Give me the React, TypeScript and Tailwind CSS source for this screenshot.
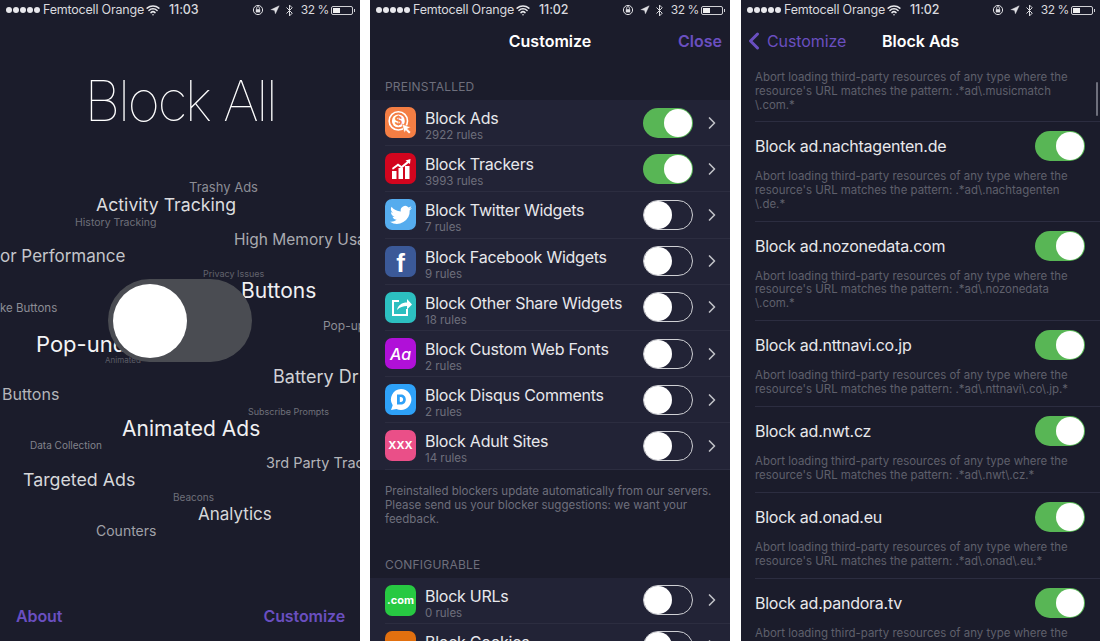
import { ReactNode } from "react";
import { ChevronRight, ChevronLeft, Navigation, Bluetooth, Wifi } from "lucide-react";

function StatusBar({ time }: { time: string }) {
  return (
    <div className="flex h-5 items-center pl-[6px] pr-[5px] text-[12.5px] leading-5 text-[#d9d9de]">
      <div className="flex gap-[1px]">
        {[0, 1, 2, 3, 4].map((i) => (
          <span key={i} className="h-[6px] w-[6px] rounded-full bg-[#e8e8ec]" />
        ))}
      </div>
      <span className="ml-[3px] w-[96px] whitespace-nowrap tracking-[-0.2px]">Femtocell Orange</span>
      <Wifi size={14} strokeWidth={2.6} className="ml-[7px] text-[#e8e8ec]" />
      <span className="ml-[9px] font-medium tracking-[-0.1px]">{time}</span>
      <div className="ml-auto flex items-center">
        <svg width="12" height="12" viewBox="0 0 12 12" className="mr-[6px]">
          <circle cx="6" cy="6" r="4.6" fill="none" stroke="#e0e0e4" strokeWidth="1" />
          <rect x="3.8" y="5.2" width="4.4" height="3.2" fill="#e0e0e4" />
          <path d="M4.6 5.2V4a1.4 1.4 0 0 1 2.8 0v1.2" fill="none" stroke="#e0e0e4" strokeWidth="0.8" />
        </svg>
        <Navigation size={10} fill="#e0e0e4" strokeWidth={1} className="mr-[3px] text-[#e0e0e4]" />
        <Bluetooth size={13} strokeWidth={1.8} className="mr-[5px] text-[#e0e0e4]" />
        <span className="mr-[2px] whitespace-nowrap text-[12px] tracking-[-0.4px]">32 %</span>
        <div className="flex h-[9px] w-[22px] items-stretch rounded-[2px] border border-[#d0d0d4] p-[1px]">
          <div className="w-[7px] bg-[#f0f0f0]" />
        </div>
        <span className="ml-[1px] h-[3px] w-[1px] bg-[#d0d0d4]" />
      </div>
    </div>
  );
}

function Toggle({ on }: { on: boolean }) {
  return (
    <div
      className={
        on
          ? "flex h-[30px] w-[50px] shrink-0 items-center justify-end rounded-full bg-[#58b655] pr-[1px]"
          : "flex h-[30px] w-[50px] shrink-0 items-center rounded-full border border-[#cfd0d4] bg-transparent"
      }
    >
      <span className="h-[28px] w-[28px] rounded-full bg-white" />
    </div>
  );
}

const words = [
  { t: "Trashy Ads", c: "left-[189px] top-[178px] text-[13px] text-[#8c8d95]" },
  { t: "Activity Tracking", c: "left-[96px] top-[192px] text-[17.7px] text-[#dcdcdf]" },
  { t: "History Tracking", c: "left-[75px] top-[215px] text-[10.5px] text-[#6f707a]" },
  { t: "High Memory Usa", c: "left-[234px] top-[228px] text-[15.5px] text-[#a9aab0]" },
  { t: "or Performance", c: "left-0 top-[244px] text-[17px] text-[#c4c5ca]" },
  { t: "Privacy Issues", c: "left-[203px] top-[267px] text-[9px] text-[#62636d]" },
  { t: "Buttons", c: "left-[241px] top-[275px] text-[21px] text-[#f0f0f2]" },
  { t: "ke Buttons", c: "left-0 top-[300px] text-[11.5px] text-[#8c8d95]" },
  { t: "Pop-up", c: "left-[323px] top-[317px] text-[12px] text-[#8c8d95]" },
  { t: "Pop-under", c: "left-[36px] top-[328px] text-[22px] text-[#f4f4f6]" },
  { t: "Animated", c: "left-[105px] top-[354px] text-[8px] text-[#5c5d67]" },
  { t: "Battery Dr", c: "left-[273px] top-[363px] text-[18px] text-[#d0d1d5]" },
  { t: "Buttons", c: "left-[2px] top-[382px] text-[16px] text-[#b4b5ba]" },
  { t: "Subscribe Prompts", c: "left-[248px] top-[405px] text-[9px] text-[#6f707a]" },
  { t: "Animated Ads", c: "left-[122px] top-[413px] text-[21px] text-[#f0f0f2]" },
  { t: "Data Collection", c: "left-[30px] top-[438px] text-[10px] text-[#82838c]" },
  { t: "3rd Party Trac", c: "left-[266px] top-[452px] text-[14.5px] text-[#b4b5ba]" },
  { t: "Targeted Ads", c: "left-[23px] top-[467px] text-[17.8px] text-[#d6d7da]" },
  { t: "Beacons", c: "left-[173px] top-[490px] text-[10px] text-[#6f707a]" },
  { t: "Analytics", c: "left-[198px] top-[502px] text-[17px] text-[#d6d7da]" },
  { t: "Counters", c: "left-[96px] top-[520px] text-[14px] text-[#a0a1a8]" },
];

function BlockAllPanel() {
  return (
    <div className="relative flex h-full w-[360px] shrink-0 flex-col overflow-hidden bg-[#1b1c2b]">
      <StatusBar time="11:03" />
      <h1 className="mt-[45px] text-center text-[56px] font-thin leading-[72px] tracking-[-2.5px] text-white">
        Block All
      </h1>
      {words.map((w) => (
        <span key={w.t + w.c} className={"absolute whitespace-nowrap leading-normal " + w.c}>
          {w.t}
        </span>
      ))}
      <div className="absolute left-[108px] top-[279px] flex h-[83px] w-[144px] items-center rounded-full bg-[#4a4c52] pl-[5px]">
        <span className="h-[74px] w-[74px] rounded-full bg-white" />
      </div>
      <div className="mt-auto flex justify-between pb-[13px] pl-4 pr-[15px] text-[16px] font-semibold leading-6 tracking-[-0.1px] text-[#6a4fc0]">
        <span>About</span>
        <span>Customize</span>
      </div>
    </div>
  );
}

function IconBox({ bg, children }: { bg: string; children: ReactNode }) {
  return (
    <div className={"flex h-[31px] w-[31px] shrink-0 items-center justify-center overflow-hidden rounded-[7px] " + bg}>
      {children}
    </div>
  );
}

const adsIcon = (
  <svg width="27" height="27" viewBox="0 0 25 25" fill="none">
    <circle cx="10.5" cy="11" r="8.5" stroke="#fff" strokeWidth="1.5" />
    <circle cx="10.5" cy="11" r="6" fill="#fff" />
    <text x="10.5" y="15" textAnchor="middle" fontSize="11" fontWeight="700" fill="#f47e44" fontFamily="Inter, sans-serif">$</text>
    <path d="M14 14l8 3-3 1.4 3 3-1.6 1.6-3-3L16 22z" fill="#fff" stroke="#f47e44" strokeWidth="0.6" />
  </svg>
);

const trackersIcon = (
  <svg width="22" height="22" viewBox="0 0 22 22" fill="#fff">
    <rect x="2" y="13" width="4.5" height="8" />
    <rect x="8.5" y="10" width="4.5" height="11" />
    <rect x="15" y="8" width="4.5" height="13" />
    <path d="M2 10l6-4.5 3.5 2.5L17 3.5l-1.5-1L20.5 1l-.5 5-1.4-1-7 5.5L8 8l-5.2 3.7z" />
  </svg>
);

const twitterIcon = (
  <svg width="24" height="24" viewBox="0 0 24 24" fill="#fff">
    <path d="M23 5.1c-.8.4-1.7.6-2.6.7.9-.6 1.6-1.4 2-2.5-.9.5-1.9.9-2.9 1.1A4.5 4.5 0 0 0 11.8 8.5C8 8.3 4.700 6.500 2.500 3.700c-1.200 2-.6 4.700 1.400 6-.7 0-1.400-.2-2-.6 0 2.200 1.500 4.100 3.600 4.500-.7.2-1.400.2-2 .1.600 1.800 2.300 3.100 4.200 3.100A9.100 9.100 0 0 1 1 18.700 12.800 12.800 0 0 0 20.700 7.300c.9-.6 1.700-1.300 2.300-2.200z" />
  </svg>
);

const shareIcon = (
  <svg width="24" height="24" viewBox="0 0 24 24" fill="none" stroke="#fff" strokeWidth="2">
    <path d="M10 6H4v14h14v-6" />
    <path d="M8 15c1-5 5-7.500 10-7.500V4l5 5.500-5 5V11c-4 0-7 1-10 4z" fill="#fff" stroke="none" />
  </svg>
);

const disqusIcon = (
  <svg width="25" height="25" viewBox="0 0 25 25">
    <path d="M13 2a10.500 10.500 0 1 1-4.600 20L3 23l1.700-4.700A10.500 10.500 0 0 1 13 2z" fill="#fff" />
    <path d="M9 7.500h3.800c3 0 5 2 5 5s-2 5-5 5H9zM11.800 10v5h1c1.500 0 2.300-1 2.300-2.500S14.300 10 12.800 10z" fill="#2ea1f8" fillRule="evenodd" />
  </svg>
);

type Blocker = { name: string; rules: string; on?: boolean; icon: ReactNode; bg: string };

const preinstalled: Blocker[] = [
  { name: "Block Ads", rules: "2922 rules", on: true, bg: "bg-[#f47e44]", icon: adsIcon },
  { name: "Block Trackers", rules: "3993 rules", on: true, bg: "bg-[#d2051e]", icon: trackersIcon },
  { name: "Block Twitter Widgets", rules: "7 rules", bg: "bg-[#55acee]", icon: twitterIcon },
  {
    name: "Block Facebook Widgets",
    rules: "9 rules",
    bg: "bg-[#3b5998]",
    icon: <span className="mt-[3px] font-['Liberation_Sans'] text-[26px] font-bold leading-none text-white">f</span>,
  },
  { name: "Block Other Share Widgets", rules: "18 rules", bg: "bg-[#2cbfc0]", icon: shareIcon },
  {
    name: "Block Custom Web Fonts",
    rules: "2 rules",
    bg: "bg-[#b010d8]",
    icon: <span className="text-[16px] font-medium italic leading-none text-white">Aa</span>,
  },
  { name: "Block Disqus Comments", rules: "2 rules", bg: "bg-[#2ea1f8]", icon: disqusIcon },
  {
    name: "Block Adult Sites",
    rules: "14 rules",
    bg: "bg-[#ea4f88]",
    icon: <span className="text-[11px] font-bold leading-none text-white">XXX</span>,
  },
];

const configurable: Blocker[] = [
  {
    name: "Block URLs",
    rules: "0 rules",
    bg: "bg-[#27c942]",
    icon: <span className="text-[11px] font-bold leading-none text-white">.com</span>,
  },
  {
    name: "Block Cookies",
    rules: "0 rules",
    bg: "bg-[#e2700f]",
    icon: <span className="mt-[14px] h-[22px] w-[22px] rounded-full bg-white" />,
  },
];

function BlockerRow({ item }: { item: Blocker }) {
  return (
    <div className="ml-[15px] flex h-[46.2px] items-center border-b border-[#2c2d40] pr-[8px]">
      <IconBox bg={item.bg}>{item.icon}</IconBox>
      <div className="ml-[9px] min-w-0 flex-1 pt-[6px]">
        <div className="text-[16px] leading-[20px] tracking-[-0.25px] text-[#e8e8ec]">{item.name}</div>
        <div className="text-[11.5px] leading-[15px] text-[#6e6f7c]">{item.rules}</div>
      </div>
      <Toggle on={!!item.on} />
      <ChevronRight size={20} strokeWidth={2} className="ml-[9px] text-[#bfc0c6]" />
    </div>
  );
}

function CustomizePanel() {
  return (
    <div className="flex h-full w-[360px] shrink-0 flex-col overflow-hidden bg-[#1b1c2b]">
      <StatusBar time="11:02" />
      <div className="relative flex h-[41px] shrink-0 items-center justify-center text-[16px] font-semibold text-white">
        Customize
        <span className="absolute right-[8px] text-[#6a4fc0]">Close</span>
      </div>
      <div className="flex h-[39px] shrink-0 items-end px-[15px] pb-[5px] text-[12px] leading-4 tracking-[0.2px] text-[#6e6f7c]">
        PREINSTALLED
      </div>
      <div className="shrink-0 bg-[#222336]">
        {preinstalled.map((b) => (
          <BlockerRow key={b.name} item={b} />
        ))}
      </div>
      <p className="shrink-0 px-[15px] pt-[14px] text-[11.5px] leading-[14px] text-[#6e6f7c]">
        Preinstalled blockers update automatically from our servers. Please send us your blocker suggestions: we want your feedback.
      </p>
      <div className="flex h-[52px] shrink-0 items-end px-[15px] pb-[5px] text-[12px] leading-4 tracking-[0.2px] text-[#6e6f7c]">
        CONFIGURABLE
      </div>
      <div className="shrink-0 bg-[#222336]">
        {configurable.map((b) => (
          <BlockerRow key={b.name} item={b} />
        ))}
      </div>
    </div>
  );
}

const adRules = [
  { name: "Block ad.nachtagenten.de", pattern: ".*ad\\.nachtagenten\n\\.de.*" },
  { name: "Block ad.nozonedata.com", pattern: ".*ad\\.nozonedata\n\\.com.*" },
  { name: "Block ad.nttnavi.co.jp", pattern: ".*ad\\.nttnavi\\.co\\.jp.*" },
  { name: "Block ad.nwt.cz", pattern: ".*ad\\.nwt\\.cz.*" },
  { name: "Block ad.onad.eu", pattern: ".*ad\\.onad\\.eu.*" },
  { name: "Block ad.pandora.tv", pattern: "" },
];

function Description({ pattern }: { pattern: string }) {
  return (
    <p className="whitespace-pre-line text-[11.45px] leading-[13.8px] text-[#5f606c]">
      {"Abort loading third-party resources of any type where the\nresource's URL matches the pattern: " + pattern}
    </p>
  );
}

function BlockAdsPanel() {
  return (
    <div className="relative ml-[1px] flex h-full w-[359px] shrink-0 flex-col overflow-hidden bg-[#1b1c2b]">
      <StatusBar time="11:02" />
      <div className="relative flex h-[41px] shrink-0 items-center justify-center text-[16px] font-semibold text-white">
        <div className="absolute left-[3px] flex items-center font-normal tracking-[-0.1px] text-[#6a4fc0]">
          <ChevronLeft size={28} strokeWidth={2.6} className="-ml-[4px]" />
          <span className="-ml-[1px]">Customize</span>
        </div>
        Block Ads
      </div>
      <div className="shrink-0 pl-[14px]">
        <div className="h-[61px] border-b border-[#2c2d40] pt-[10px]">
          <Description pattern={".*ad\\.musicmatch\n\\.com.*"} />
        </div>
        {adRules.map((r) => (
          <div key={r.name} className="border-b border-[#2c2d40] pb-[9.3px]">
            <div className="flex h-[48px] items-center pr-[15px] text-[16px] tracking-[-0.25px] text-[#e8e8ec]">
              <span className="flex-1">{r.name}</span>
              <Toggle on />
            </div>
            <Description pattern={r.pattern} />
          </div>
        ))}
      </div>
      <span className="absolute right-[2px] top-[82px] h-[34px] w-[2px] rounded-full bg-[#6e6f7c]" />
    </div>
  );
}

export default function App() {
  return (
    <div className="flex h-[641px] w-[1100px] gap-[10px] overflow-hidden bg-white font-['Inter',sans-serif] antialiased">
      <BlockAllPanel />
      <CustomizePanel />
      <BlockAdsPanel />
    </div>
  );
}
